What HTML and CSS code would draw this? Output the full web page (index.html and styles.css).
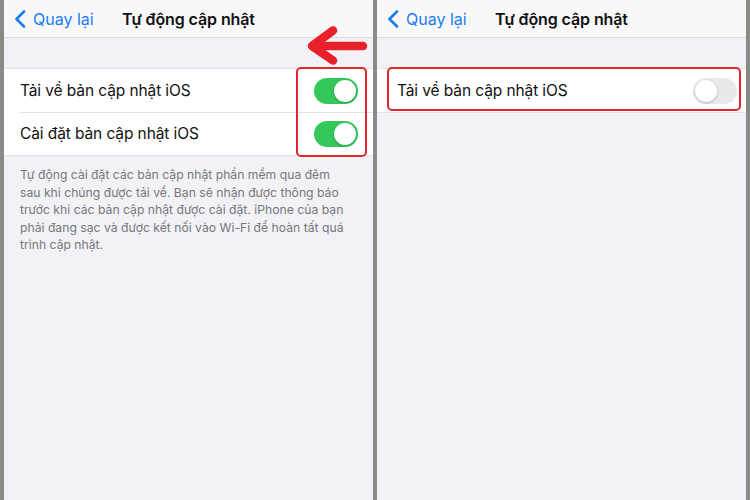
FILE: index.html
```html
<!DOCTYPE html>
<html lang="vi">
<head>
<meta charset="utf-8">
<link rel="stylesheet" href="styles.css">
</head>
<body>
<div class="frame">
  <section class="panel panel-a">
    <header class="nav">
      <div class="back">
        <svg class="chev" width="12" height="18" viewBox="0 0 12 18"><path d="M10 1.5 L2.5 9 L10 16.5" fill="none" stroke="#1a7cf5" stroke-width="2.6" stroke-linecap="round" stroke-linejoin="round"/></svg>
        <span>Quay lại</span>
      </div>
      <div class="title">Tự động cập nhật</div>
    </header>
    <div class="gap"></div>
    <div class="group">
      <div class="row">
        <span class="label">Tải về bản cập nhật iOS</span>
        <span class="toggle on"><span class="knob"></span></span>
      </div>
      <div class="row">
        <span class="label">Cài đặt bản cập nhật iOS</span>
        <span class="toggle on"><span class="knob"></span></span>
      </div>
    </div>
    <p class="foot">Tự động cài đặt các bản cập nhật phần mềm qua đêm<br>sau khi chúng được tải về. Bạn sẽ nhận được thông báo<br>trước khi các bản cập nhật được cài đặt. iPhone của bạn<br>phải đang sạc và được kết nối vào Wi-Fi để hoàn tất quá<br>trình cập nhật.</p>
    <div class="hl hl-left"></div>
    <svg class="arrow" width="64" height="40" viewBox="0 0 64 40"><path d="M28 5.5 L7 21 L28 35.5 M9 21 L58 21" fill="none" stroke="#e8212b" stroke-width="8.5" stroke-linecap="round" stroke-linejoin="round"/></svg>
  </section>
  <section class="panel panel-b">
    <header class="nav">
      <div class="back">
        <svg class="chev" width="12" height="18" viewBox="0 0 12 18"><path d="M10 1.5 L2.5 9 L10 16.5" fill="none" stroke="#1a7cf5" stroke-width="2.6" stroke-linecap="round" stroke-linejoin="round"/></svg>
        <span>Quay lại</span>
      </div>
      <div class="title">Tự động cập nhật</div>
    </header>
    <div class="gap"></div>
    <div class="group">
      <div class="row">
        <span class="label">Tải về bản cập nhật iOS</span>
        <span class="toggle"><span class="knob"></span></span>
      </div>
    </div>
    <div class="hl hl-right"></div>
  </section>
</div>
</body>
</html>
```
FILE: styles.css
```css
html, body {
  margin: 0;
  padding: 0;
}
body {
  width: 750px;
  height: 500px;
  background: #8c8a87;
  font-family: "Inter", "Liberation Sans", sans-serif;
  overflow: hidden;
}
.frame {
  display: flex;
  gap: 4px;
  padding: 0 4px;
  height: 500px;
}
.panel {
  position: relative;
  width: 369px;
  flex: none;
  background: #f2f2f6;
}
.nav {
  position: relative;
  height: 37px;
  background: #f8f8f9;
  border-bottom: 1px solid #dcdce0;
  display: flex;
  align-items: center;
  justify-content: center;
}
.back {
  position: absolute;
  left: 10px;
  top: 0;
  height: 37px;
  display: flex;
  align-items: center;
  gap: 7px;
  color: #1a7cf5;
  font-size: 16px;
}
.chev {
  display: block;
}
.title {
  font-size: 16px;
  font-weight: 600;
  color: #111;
  letter-spacing: -0.1px;
}
.gap {
  height: 30px;
}
.group {
  background: #fff;
  border-top: 1px solid #e2e2e6;
  border-bottom: 1px solid #e2e2e6;
}
.row {
  height: 43px;
  display: flex;
  align-items: center;
  justify-content: space-between;
  padding: 0 15px 0 16px;
  position: relative;
}
.panel-b .row {
  padding: 0 9px 0 20px;
}
.row + .row::before {
  content: "";
  position: absolute;
  left: 16px;
  right: 0;
  top: 0;
  border-top: 1px solid #e2e2e6;
}
.label {
  font-size: 15.5px;
  color: #111;
  letter-spacing: -0.1px;
}
.toggle {
  width: 44px;
  height: 26px;
  border-radius: 13px;
  background: #e9e9ec;
  position: relative;
  flex: none;
}
.toggle .knob {
  position: absolute;
  top: 2px;
  left: 2px;
  width: 22px;
  height: 22px;
  border-radius: 50%;
  background: #fff;
  box-shadow: 0 1px 3px rgba(0,0,0,0.22);
}
.toggle.on {
  background: #34c759;
}
.toggle.on .knob {
  left: 20px;
}
.foot {
  margin: 10px 0 0;
  padding: 0 16px;
  font-size: 12.2px;
  line-height: 17.5px;
  color: #76767b;
}
.hl {
  position: absolute;
  border: 2px solid #e02530;
  border-radius: 5px;
}
.hl-left {
  left: 292px;
  top: 67px;
  width: 67px;
  height: 86px;
}
.hl-right {
  left: 10px;
  top: 67px;
  width: 350px;
  height: 40px;
}
.arrow {
  position: absolute;
  left: 301px;
  top: 25px;
}
```
